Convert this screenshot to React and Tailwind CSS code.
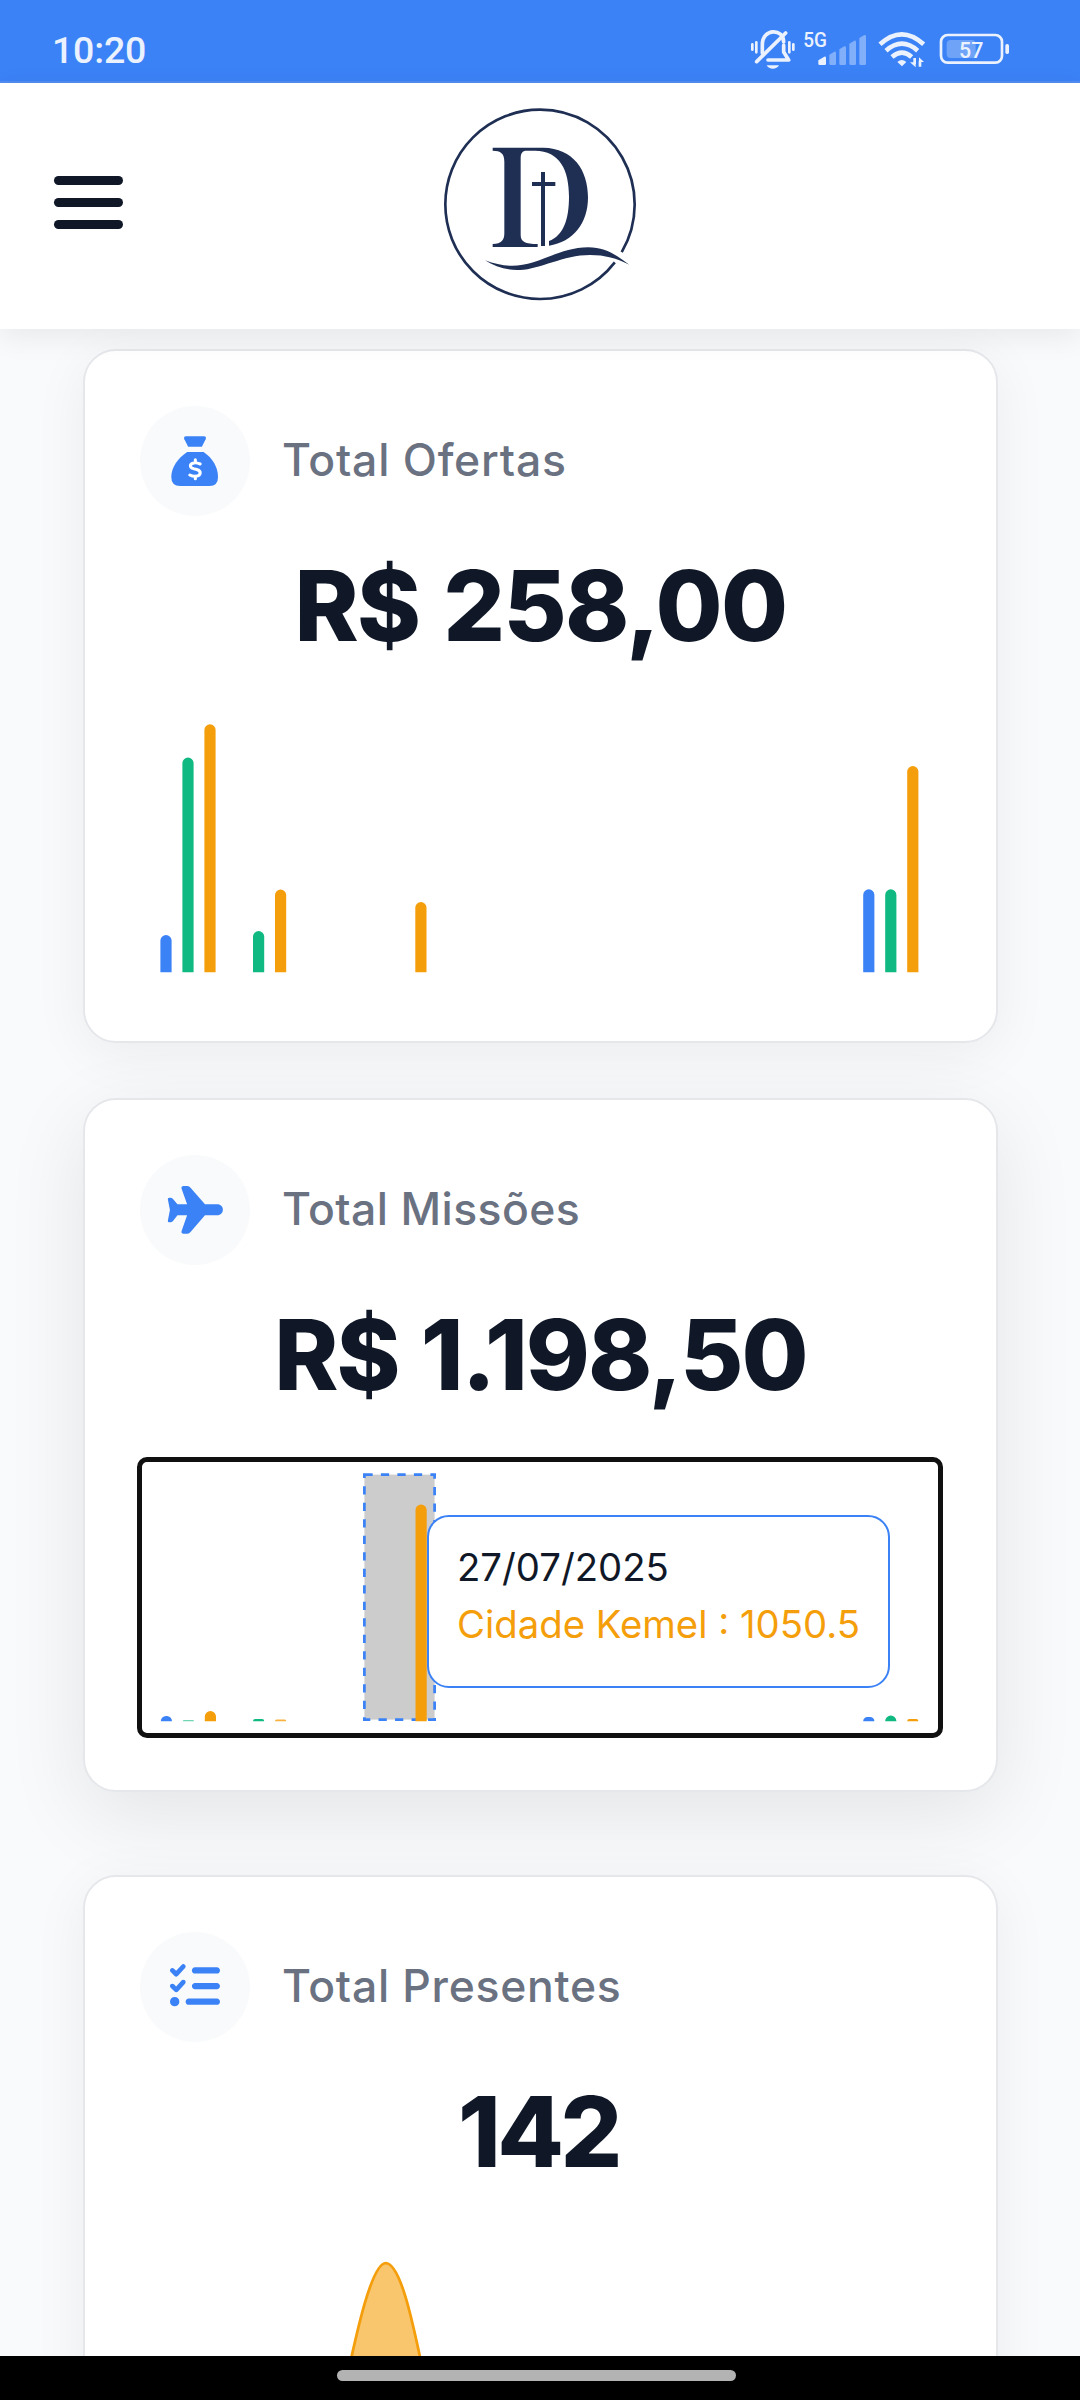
import React from 'react';
import { FaListCheck } from 'react-icons/fa6';

const BLUE = '#3b82f6';
const GREEN = '#10b981';
const ORANGE = '#f59e0b';

function StatusBar() {
  return (
    <div className="flex h-[83px] shrink-0 items-start justify-between border-b-2 border-[#508df0] bg-[#3b82f6] pl-[52px] pr-[70px] text-[#ebf2fe]">
      <span className="mt-[31px] font-['Roboto'] text-[37.5px] font-medium leading-[38px] tracking-[-0.2px]">10:20</span>
      <svg width="260" height="50" viewBox="90 75 780 150" className="mt-[25px]" fill="none" stroke="#ebf2fe">
        <g strokeWidth="8" strokeLinecap="round">
          <path d="M97 133v16M109 127v30M208 127v30M220 133v16" />
          <path d="M127 160v-26c0-50 64-50 64-8M191 136v20l15 24h-62" strokeWidth="11" strokeLinejoin="round" />
          <path d="M110 185L197 99" strokeWidth="11" />
        </g>
        <path d="M140 196h37c-6 14-31 14-37 0z" fill="#ebf2fe" stroke="none" />
        <text x="250" y="140" className="font-['Roboto'] font-medium" fontSize="59" textLength="71" fill="#ebf2fe" stroke="none" lengthAdjust="spacingAndGlyphs">5G</text>
        <g stroke="none" fill="#81affa">
          <path d="M295 181l18-11q5-1 5 4v17q0 4-4 4h-15q-4 0-4-4z" fill="#ebf2fe" />
          <path d="M328 164l15-9q5-1 5 4v32q0 4-4 4h-12q-4 0-4-4z" />
          <path d="M358 148l15-9q5-1 5 4v48q0 4-4 4h-12q-4 0-4-4z" />
          <path d="M388 131l15-9q5-1 5 4v65q0 4-4 4h-12q-4 0-4-4z" />
          <path d="M418 114l15-9q5-1 5 4v82q0 4-4 4h-12q-4 0-4-4z" />
        </g>
        <g strokeWidth="14">
          <path d="M480 133q65-60 131 0" />
          <path d="M498 152q48-42 95 0" />
          <path d="M516 171q30-26 59 0" />
        </g>
        <path d="M532 186q13-12 27 0l-13 13z" fill="#ebf2fe" stroke="none" />
        <path d="M584 174v18M600 182v18" strokeWidth="8" />
        <path d="M570 187h17v15zM597 172l15 14h-15z" fill="#ebf2fe" stroke="none" />
        <rect x="663" y="105" width="183" height="83" rx="20" strokeWidth="8" />
        <rect x="680" y="120" width="87" height="54" rx="12" fill="#6fa3f8" stroke="none" />
        <rect x="856" y="132" width="11" height="30" rx="5" fill="#ebf2fe" stroke="none" />
        <text x="717" y="173" className="font-['Roboto'] font-medium" fontSize="68" textLength="73" fill="#ebf2fe" stroke="none" lengthAdjust="spacingAndGlyphs">57</text>
      </svg>
    </div>
  );
}

function Logo() {
  return (
    <svg width="220" height="230" viewBox="0 0 660 690" fill="#1f2f54">
      <path d="M554.4 517A284 284 0 0 1 330 627A284 284 0 0 1 330 59A284 284 0 0 1 575.2 486.3" fill="none" stroke="#1f2f54" strokeWidth="8" />
      <path d="M188 173H340C430 175 474 240 474 322C474 400 430 456 357 467V453C400 436 417 390 417 320C417 240 390 183 315 182H290C277 182 272 190 272 205V435C272 455 285 462 323 462V471H188V462C215 462 223 450 223 430V215C223 190 212 182 188 182Z" />
      <path d="M333 246h12v222h-12zM306 276h70v12h-70z" />
      <path d="M165 511C215 530 260 533 310 517C370 497 410 473 475 472C530 472 565 500 598 524C560 505 525 495 480 495C400 495 330 538 270 540C230 542 195 530 165 511Z" />
    </svg>
  );
}

function Header() {
  return (
    <header className="relative z-10 grid h-[246px] shrink-0 grid-cols-[1fr_220px_1fr] items-start bg-white pt-[7px] shadow-[0_8px_28px_rgba(0,0,0,0.07)]">
      <div className="ml-[54px] mt-[86px] flex w-[69px] flex-col gap-[13px]">
        <span className="h-[9px] rounded-full bg-gray-900" />
        <span className="h-[9px] rounded-full bg-gray-900" />
        <span className="h-[9px] rounded-full bg-gray-900" />
      </div>
      <Logo />
    </header>
  );
}

function SackIcon() {
  return (
    <svg width="110" height="110" viewBox="203 227 320 330" preserveAspectRatio="none" fill={BLUE}>
      <path d="M337 318h52q8 0 5 9l-11 22h-40l-11-22q-3-9 5-9z" />
      <path d="M340 365h48c26 18 42 46 42 75q0 27-25 27h-85q-26 0-26-27c0-29 20-57 46-75z" />
      <path d="M378 401c-7-3-13-4-18-3c-14 2-13 14-1 17c11 2 20 4 19 14c-2 11-20 11-30 5M364 388v8M364 437v8" fill="none" stroke="#fff" strokeWidth="9" strokeLinecap="round" />
    </svg>
  );
}

function PlaneIcon() {
  return (
    <svg width="110" height="110" viewBox="203 75 320 330" preserveAspectRatio="none" fill={BLUE}>
      <path d="M392 223h35c23 0 23 33 0 33h-35l-42 50q-4 5-9 5h-11q-8 0-6-8l16-47h-28l-13 17q-3 4-8 4h-3q-5 0-4-5l6-32l-6-32q-1-5 4-5h3q5 0 8 4l13 16h28l-16-47q-2-8 6-8h11q5 0 9 5z" />
    </svg>
  );
}

function Card({ icon, title, value, className, titleClass, valueClass, children }) {
  return (
    <section className={`h-[694px] shrink-0 rounded-[33px] border-2 border-gray-200 bg-white p-[55px] ${className}`}>
      <div className="flex items-center gap-[32px]">
        <div className="flex h-[110px] w-[110px] items-center justify-center rounded-full bg-[#f9fafb] text-[#3b82f6]">{icon}</div>
        <h3 className={`pb-[2px] font-['Inter'] text-[44.5px] font-medium leading-[66px] text-gray-500 ${titleClass}`}>{title}</h3>
      </div>
      <div className="flex h-[194px] items-start justify-center pt-[22px]">
        <p className={`whitespace-nowrap font-['Inter'] text-[97px] font-extrabold leading-[136px] text-gray-900 ${valueClass}`}>{value}</p>
      </div>
      {children}
    </section>
  );
}

function Bars({ bars, cursor }) {
  return (
    <svg width="800" height="275" viewBox="0 0 800 275" className="block">
      {cursor && (
        <rect x="224.4" y="15.6" width="70.2" height="245" fill="#ccc" stroke={BLUE} strokeWidth="2.75" strokeDasharray="8.25 8.25" />
      )}
      {bars.map(([x, top, fill, opacity = 1]) => {
        const h = 262.2 - top;
        const r = Math.min(5.6, h);
        return (
          <path
            key={x}
            fill={fill}
            opacity={opacity}
            d={`M${x} 262.2v${r - h}a${r} ${r} 0 0 1 ${r} ${-r}h${11.2 - 2 * r}a${r} ${r} 0 0 1 ${r} ${r}v${h - r}z`}
          />
        );
      })}
    </svg>
  );
}

const offerings = [
  [20.4, 225, BLUE], [42.4, 47.5, GREEN], [64.4, 14.3, ORANGE],
  [113, 221, GREEN], [135, 179.5, ORANGE], [275.3, 192, ORANGE],
  [723.2, 179.3, BLUE], [745.2, 179.3, GREEN], [767.2, 56, ORANGE],
];

const missions = [
  [20.8, 257, BLUE], [42.8, 261, GREEN, 0.6], [64.8, 252, ORANGE],
  [113, 260, GREEN], [135, 260.6, ORANGE, 0.8], [275.5, 45.5, ORANGE],
  [723.2, 258, BLUE], [745.2, 256.5, GREEN], [767.2, 260, ORANGE],
];

function Tooltip() {
  return (
    <div className="absolute left-[287px] top-[56px] flex h-[173px] w-[463px] flex-col rounded-[22px] border-2 border-[#3b82f6] bg-white pl-[28px] pt-[22px] font-['Inter'] text-[38.3px] leading-[57px]">
      <p className="text-gray-900">27/07/2025</p>
      <p className="whitespace-nowrap text-[#f59e0b]">Cidade Kemel : 1050.5</p>
    </div>
  );
}

export default function App() {
  return (
    <div className="flex h-[2400px] w-[1080px] flex-col overflow-hidden bg-[#f9fafb]">
      <StatusBar />
      <Header />
      <main className="flex min-h-0 flex-1 flex-col overflow-hidden pl-[83px] pr-[82px] pt-[20px]">
        <Card icon={<SackIcon />} title="Total Ofertas" value="R$ 258,00" className="shadow-[0_11px_55px_rgba(0,0,0,0.06)]" titleClass="tracking-[0.77px]" valueClass="tracking-[-1.6px] [word-spacing:4px]">
          <Bars bars={offerings} />
        </Card>
        <Card icon={<PlaneIcon />} title="Total Missões" value="R$ 1.198,50" className="relative mt-[55px] shadow-[0_22px_82px_rgba(0,0,0,0.09)]" titleClass="tracking-[0.4px]" valueClass="tracking-[-2px] [word-spacing:3px]">
          <div className="relative">
            <Bars bars={missions} cursor />
            <div className="absolute left-[-3px] top-[-2px] h-[281px] w-[806px] rounded-[10px] border-[5px] border-[#101010]" />
            <Tooltip />
          </div>
        </Card>
        <Card icon={<FaListCheck size={50} className="mb-[2px]" />} title="Total Presentes" value="142" className="relative mt-[83px] shadow-[0_11px_55px_rgba(0,0,0,0.06)]" titleClass="tracking-[0.7px]" valueClass="mr-[4px] tracking-[-3.5px]">
          <svg width="800" height="275" viewBox="0 0 800 275" className="block">
            <path d="M204 155C213 115 230 27 245.7 27C260 27 272 80 287 155z" fill={ORANGE} fillOpacity="0.6" stroke={ORANGE} strokeWidth="2.75" />
          </svg>
        </Card>
      </main>
      <footer className="relative z-10 flex h-[44px] shrink-0 justify-center bg-black pt-[14px]">
        <div className="mr-[7px] h-[11px] w-[399px] rounded-full bg-[#b3b3b3]" />
      </footer>
    </div>
  );
}
